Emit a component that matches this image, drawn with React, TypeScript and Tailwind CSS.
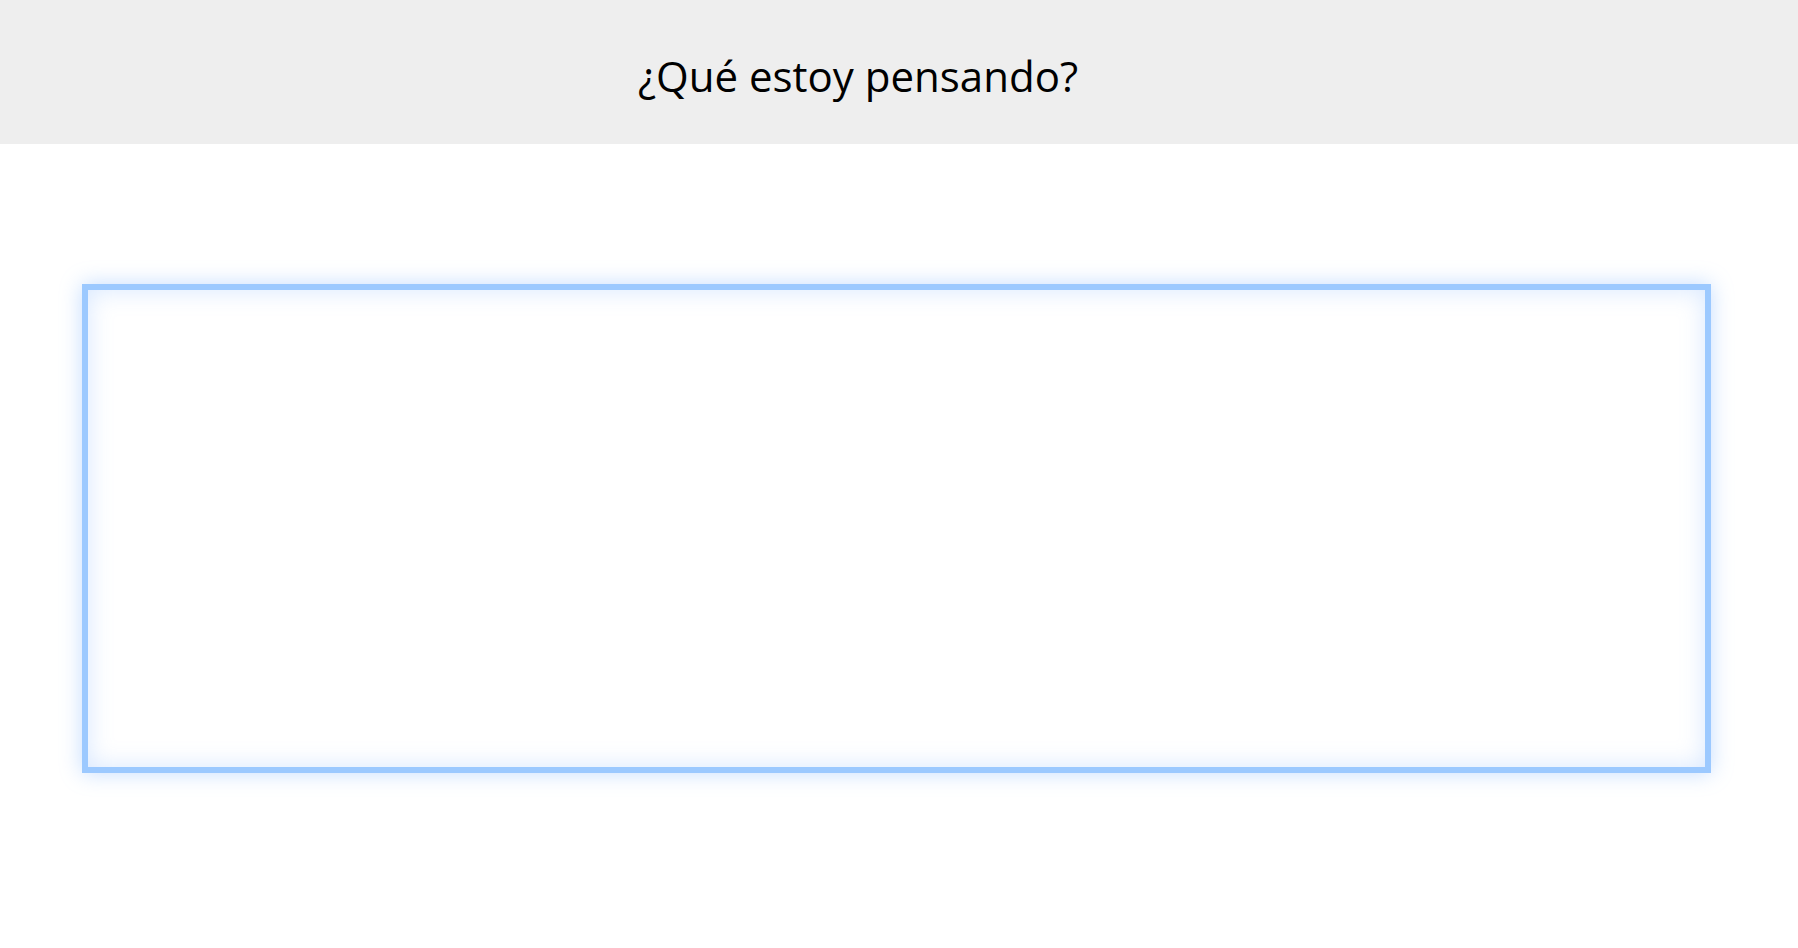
export default function App() {
  return (
    <div className="min-h-screen w-full bg-white" style={{ fontFamily: '"Open Sans", "Noto Sans", sans-serif' }}>
      <header className="h-[144px] w-full bg-[#eeeeee] pr-[82px] text-center">
        <h1 className="pt-[48px] text-[42px] leading-[56px] font-normal text-black">¿Qué estoy pensando?</h1>
      </header>
      <main className="pt-[140px] pl-[82px] pr-[87px]">
        <textarea
          className="block h-[489px] w-full resize-none border-[6px] border-[#9cc9ff] bg-white outline-none shadow-[0_0_20px_rgba(110,170,255,0.4),inset_0_0_24px_rgba(110,170,255,0.28)]"
        />
      </main>
    </div>
  );
}
